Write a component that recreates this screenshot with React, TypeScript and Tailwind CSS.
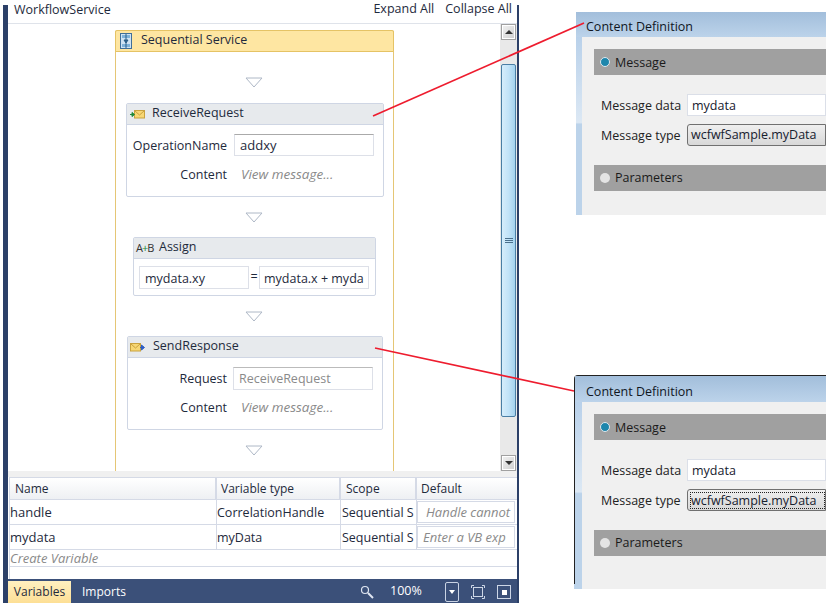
import React from 'react';

const font = "font-['Open_Sans','Noto_Sans',sans-serif]";

function Triangle() {
  return (
    <div className="flex justify-center pr-[2px]">
      <svg width="18" height="11" viewBox="0 0 18 11">
        <path d="M1 1 H17 L9 10 Z" fill="#fff" stroke="#aeb8c6" strokeWidth="1" />
      </svg>
    </div>
  );
}

function ReceiveIcon() {
  return (
    <svg className="block" width="15" height="10" viewBox="0 0 15 10">
      <rect x="4.5" y="1.5" width="10" height="7.5" fill="#f7d774" stroke="#c9a23f" />
      <path d="M5 2 L9.5 6 L14 2" fill="none" stroke="#c9a23f" />
      <path d="M0 5.5 H3 M2 3.5 L4.5 5.5 L2 7.5 Z" fill="#1d8a3b" stroke="#1d8a3b" />
    </svg>
  );
}

function SendIcon() {
  return (
    <svg className="block" width="15" height="10" viewBox="0 0 15 10">
      <rect x="0.5" y="1.5" width="10" height="7.5" fill="#f7d774" stroke="#c9a23f" />
      <path d="M1 2 L5.5 6 L10 2" fill="none" stroke="#c9a23f" />
      <path d="M10 5.5 H12 M11.5 3 L14.5 5.5 L11.5 8 Z" fill="#2f5fc4" stroke="#2f5fc4" />
    </svg>
  );
}

function SequenceIcon() {
  return (
    <svg className="block" width="12" height="16" viewBox="0 0 12 16">
      <rect x="0.5" y="0.5" width="11" height="15" fill="#cfe3f3" stroke="#3f6f99" />
      <rect x="2" y="2" width="8" height="3" fill="#7fb2d9" />
      <rect x="2" y="11" width="8" height="3" fill="#7fb2d9" />
      <path d="M6 1 V15 M4 7 H8 L6 10 Z" stroke="#2b5f88" fill="#2b5f88" strokeWidth="1" />
    </svg>
  );
}

function Activity({
  title,
  icon,
  className,
  headerPad,
  children,
}: {
  title: string;
  icon: React.ReactNode;
  className: string;
  headerPad: string;
  children: React.ReactNode;
}) {
  return (
    <div className={`rounded-[2px] border border-[#cfd6e4] bg-white ${className}`}>
      <div className="flex h-[21px] items-center bg-[#e7eaed] border-b border-[#cfd6e4]">
        <div className={headerPad}>{icon}</div>
        <span className="-mt-[2px] text-[12.5px] text-[#1e2a3c]">{title}</span>
      </div>
      {children}
    </div>
  );
}

function Dialog({ focused, className }: { focused?: boolean; className: string }) {
  return (
    <div className={`absolute flex flex-col ${font} ${className}`}>
      <div
        className={`flex shrink-0 items-center bg-gradient-to-b from-[#a2bedb] to-[#bcd3ea] text-[12.5px] text-[#10161f] ${
          focused ? 'h-[26px] pl-[11px] pt-[6px]' : 'h-[25px] pl-[10px] pt-[5px]'
        }`}
      >
        Content Definition
      </div>
      <div className="flex flex-1 bg-[linear-gradient(to_bottom,#b9d1ea_0%,#dce8f4_48%,#bcd3ea_49%,#bcd3ea_100%)]">
        <div className={focused ? 'w-[7px] shrink-0' : 'w-[6px] shrink-0'} />
        <div className="flex flex-1 flex-col bg-[#f0f0f0] pl-[12px] pt-[12px]">
          <div className="flex h-[26px] items-center gap-[5px] bg-[#a0a0a0] pl-[6px] text-[12.5px] text-[#1a1a1a]">
            <span className="h-[10px] w-[10px] rounded-full border border-[#dfe8ee] bg-[#1d86ac]" />
            <span className="mt-[2px]">Message</span>
          </div>
          <div className="mt-[19px] flex h-[22px] items-center text-[12.5px] text-[#222]">
            <span className="mt-[2px] w-[93px] pl-[7px]">Message data</span>
            <div className="flex h-full flex-1 items-center border border-[#dbdfe8] bg-white pl-[4px] pt-[2px] text-[#16202e]">
              mydata
            </div>
          </div>
          <div className="mt-[8px] flex h-[22px] items-center text-[12.5px] text-[#222]">
            <span className="mt-[2px] w-[93px] pl-[7px]">Message type</span>
            <div className="flex h-full flex-1 items-center rounded-l-[3px] border border-[#707070] bg-gradient-to-b from-[#efefef] to-[#d8d8d8] pl-[2px] pt-px text-[#16202e]">
              <span className={focused ? 'flex-1 border border-dotted border-[#222] leading-[15px]' : 'pl-px'}>
                wcfwfSample.myData
              </span>
            </div>
          </div>
          <div className="mt-[19px] flex h-[26px] items-center gap-[5px] bg-[#a0a0a0] pl-[6px] text-[12.5px] text-[#1a1a1a]">
            <span className="h-[10px] w-[10px] rounded-full bg-[#e4e4e4]" />
            <span>Parameters</span>
          </div>
        </div>
      </div>
      {focused && <div className="absolute -left-px bottom-0 h-[5px] w-[7px] bg-[#bcd3ea]" />}
    </div>
  );
}

function ScrollButton({ children, className }: { children: React.ReactNode; className: string }) {
  return (
    <div
      className={`ml-px flex w-[15px] items-center justify-center border border-[#a0a0a0] bg-gradient-to-br from-[#f2f2f2] to-[#cfcfcf] shadow-[inset_0_0_0_1px_#fff] ${className}`}
    >
      {children}
    </div>
  );
}

export default function App() {
  const rows = [
    { name: 'handle', type: 'CorrelationHandle', value: 'Handle cannot', cell: 'pl-[8px] text-[13px]' },
    { name: 'mydata', type: 'myData', value: 'Enter a VB exp', cell: 'pl-[5px] text-[13px]' },
  ];

  return (
    <div className={`relative h-[605px] w-[826px] overflow-hidden bg-white ${font}`}>
      {/* designer window */}
      <div className="ml-[3px] mt-[5px] flex h-[598px] w-[516px] flex-col border-l-[5px] border-r-[2px] border-[#2c4068] bg-white">
        <div className="flex h-[19px] shrink-0 items-start justify-between border-b border-[#dfe3ea] pl-[6px] pr-[5px] text-[12.5px] text-[#1e2a3c]">
          <span className="-mt-[3px] leading-[16px]">WorkflowService</span>
          <div className="-mt-[4px] flex gap-[11px] leading-[16px]">
            <span>Expand All</span>
            <span>Collapse All</span>
          </div>
        </div>

        <div className="flex h-[447px] shrink-0">
          <div className="flex-1 overflow-hidden pl-[107px] pt-[6px]">
            <div className="h-[445px] w-[279px] rounded-t-[2px] border-x border-[#e5c675]">
              <div className="-mx-px flex h-[22px] items-center gap-[9px] rounded-t-[2px] border border-[#e5c365] bg-[#fee6a2] pl-[4px] text-[12.5px] text-[#1e2a3c]">
                <SequenceIcon />
                <span className="-mt-[2px]">Sequential Service</span>
              </div>
              <div className="pt-[25px]">
                <Triangle />
              </div>
              <Activity
                title="ReceiveRequest"
                icon={<ReceiveIcon />}
                className="ml-[10px] mt-[15px] h-[94px] w-[258px]"
                headerPad="ml-[3px] mr-[7px]"
              >
                <div className="mt-[9px] flex h-[22px] items-center text-[12.5px] text-[#1e2a3c]">
                  <span className="mt-[2px] w-[100px] text-right">OperationName</span>
                  <div className="ml-[7px] flex h-full w-[140px] items-center border border-[#dde0e8] border-t-[#aaa] pl-[5px] pt-[2px] text-[13px]">
                    addxy
                  </div>
                </div>
                <div className="mt-[8px] flex items-center text-[12.5px] text-[#1e2a3c]">
                  <span className="mt-[2px] w-[100px] text-right">Content</span>
                  <span className="ml-[14px] text-[13.5px] italic text-[#8a8a8a]">View message...</span>
                </div>
              </Activity>
              <div className="mt-[15px]">
                <Triangle />
              </div>
              <Activity
                title="Assign"
                icon={
                  <span className="block w-[16px] whitespace-nowrap text-[11px] leading-[12px] tracking-[-1px] text-[#333]">
                    A<span className="text-[#1d8a3b]">+</span>B
                  </span>
                }
                className="ml-[17px] mt-[14px] h-[59px] w-[243px]"
                headerPad="ml-[2px] mr-[7px]"
              >
                <div className="ml-[5px] mt-[7px] flex items-center text-[12.5px] text-[#1e2a3c]">
                  <div className="flex h-[23px] w-[110px] items-center border border-[#dde0e8] pl-[5px] pt-[3px]">mydata.xy</div>
                  <span className="w-[10px] text-center">=</span>
                  <div className="flex h-[23px] w-[110px] items-center border border-[#dde0e8] pl-[4px] pt-[3px]">
                    mydata.x + myda
                  </div>
                </div>
              </Activity>
              <div className="mt-[15px]">
                <Triangle />
              </div>
              <Activity
                title="SendResponse"
                icon={<SendIcon />}
                className="ml-[11px] mt-[14px] h-[94px] w-[256px]"
                headerPad="ml-[2px] mr-[8px]"
              >
                <div className="mt-[9px] flex h-[23px] items-center text-[12.5px] text-[#1e2a3c]">
                  <span className="mt-[2px] w-[99px] text-right">Request</span>
                  <div className="ml-[6px] flex h-full w-[140px] items-center border border-[#dde0e8] border-t-[#bbb] pl-[5px] pt-[2px] text-[#8a8a8a]">
                    ReceiveRequest
                  </div>
                </div>
                <div className="mt-[7px] flex items-center text-[12.5px] text-[#1e2a3c]">
                  <span className="mt-[2px] w-[99px] text-right">Content</span>
                  <span className="ml-[14px] text-[13.5px] italic text-[#8a8a8a]">View message...</span>
                </div>
              </Activity>
              <div className="mt-[15px]">
                <Triangle />
              </div>
            </div>
          </div>

          {/* scrollbar */}
          <div className="flex w-[17px] shrink-0 flex-col bg-[#e9e9e9]">
            <ScrollButton className="h-[16px]">
              <span className="h-0 w-0 border-x-[4px] border-b-[4px] border-x-transparent border-b-[#333]" />
            </ScrollButton>
            <div className="ml-px mt-[24px] flex h-[353px] w-[15px] flex-col items-center justify-center gap-px rounded-[2px] border border-[#4a7ea5] bg-gradient-to-r from-[#d6edfb] via-[#c2e3f8] to-[#a3d2ef]">
              <span className="h-px w-[8px] bg-[#4a6f8c]" />
              <span className="h-px w-[8px] bg-[#4a6f8c]" />
              <span className="h-px w-[8px] bg-[#4a6f8c]" />
            </div>
            <ScrollButton className="mt-auto h-[16px]">
              <span className="h-0 w-0 border-x-[4px] border-t-[4px] border-x-transparent border-t-[#333]" />
            </ScrollButton>
          </div>
        </div>

        {/* variables grid */}
        <div className="h-[6px] shrink-0 bg-[#f0f0f0]" />
        <div className="ml-px flex-1 border-l border-[#d5dae6] text-[12.5px] text-[#1e2a3c]">
          <div className="flex h-[23px] border-y border-[#d5dae6] bg-gradient-to-b from-white to-[#eef0f3] text-[12px]">
            <div className="flex w-[207px] shrink-0 items-center border-r-2 border-[#d5dae6] pl-[5px]">Name</div>
            <div className="flex w-[124px] shrink-0 items-center border-r-2 border-[#d5dae6] pl-[4px]">Variable type</div>
            <div className="flex w-[76px] shrink-0 items-center border-r-2 border-[#d5dae6] pl-[5px]">Scope</div>
            <div className="flex flex-1 items-center pl-[4px]">Default</div>
          </div>
          {rows.map((r) => (
            <div key={r.name} className="flex h-[25px] border-b border-[#d5dae6]">
              <div className="flex w-[207px] shrink-0 items-center border-r border-[#d5dae6] pt-[2px] text-[13px]">{r.name}</div>
              <div className="flex w-[124px] shrink-0 items-center border-r border-[#d5dae6] pt-[2px]">{r.type}</div>
              <div className="flex w-[76px] shrink-0 items-center border-r border-[#d5dae6] pl-px pt-[2px]">Sequential S</div>
              <div className="flex min-w-0 flex-1 py-px pr-[2px]">
                <div className={`flex flex-1 items-center whitespace-nowrap border border-[#d5dae6] pt-[2px] italic text-[#8a8a8a] ${r.cell}`}>
                  {r.value}
                </div>
              </div>
            </div>
          ))}
          <div className="flex h-[17px] items-center border-b border-[#d5dae6] pt-[2px] text-[13px] italic text-[#8a8a8a]">
            Create Variable
          </div>
        </div>

        {/* bottom bar */}
        <div className="flex h-[24px] shrink-0 items-center bg-[#3b5079] pt-px text-[12px] text-white">
          <div className="flex h-[22px] w-[63px] items-center justify-center bg-gradient-to-b from-[#fff0c0] to-[#fddf95] text-[#1e2a3c]">
            Variables
          </div>
          <span className="ml-[11px] w-[46px]">Imports</span>
          <svg className="ml-[232px]" width="14" height="14" viewBox="0 0 14 14">
            <circle cx="5" cy="5" r="3.5" fill="none" stroke="#dfe6f2" strokeWidth="1.2" />
            <path d="M8 8 L13 13" stroke="#dfe6f2" strokeWidth="2" />
          </svg>
          <span className="ml-[16px] w-[33px] text-[12.5px]">100%</span>
          <div className="ml-[22px] flex h-[20px] w-[14px] items-center justify-center rounded-[2px] border border-[#c9d3e4]">
            <span className="h-0 w-0 border-x-[3px] border-t-[4px] border-x-transparent border-t-white" />
          </div>
          <svg className="ml-[12px]" width="14" height="14" viewBox="0 0 14 14">
            <rect x="2.5" y="2.5" width="9" height="9" fill="none" stroke="#cdd6e6" />
            <path d="M0.5 3 V0.5 H3 M11 0.5 H13.5 V3 M0.5 11 V13.5 H3 M11 13.5 H13.5 V11" fill="none" stroke="#cdd6e6" />
          </svg>
          <svg className="ml-[12px]" width="14" height="14" viewBox="0 0 14 14">
            <rect x="0.5" y="0.5" width="13" height="13" fill="none" stroke="#cdd6e6" />
            <rect x="5" y="5" width="5" height="5" fill="#fff" />
          </svg>
        </div>
      </div>

      {/* pasted dialogs and call-out lines */}
      <Dialog className="left-[576px] top-[12px] h-[203px] w-[250px]" />
      <Dialog focused className="left-[574px] top-[375px] h-[214px] w-[252px] rounded-tl-[4px] border-l border-t border-[#222]" />
      <svg className="absolute left-0 top-0" width="826" height="605" viewBox="0 0 826 605">
        <path d="M373 116 L584 23" stroke="#ee1c2e" strokeWidth="1.7" fill="none" />
        <path d="M375 348 L574 391" stroke="#ee1c2e" strokeWidth="1.7" fill="none" />
      </svg>
    </div>
  );
}
